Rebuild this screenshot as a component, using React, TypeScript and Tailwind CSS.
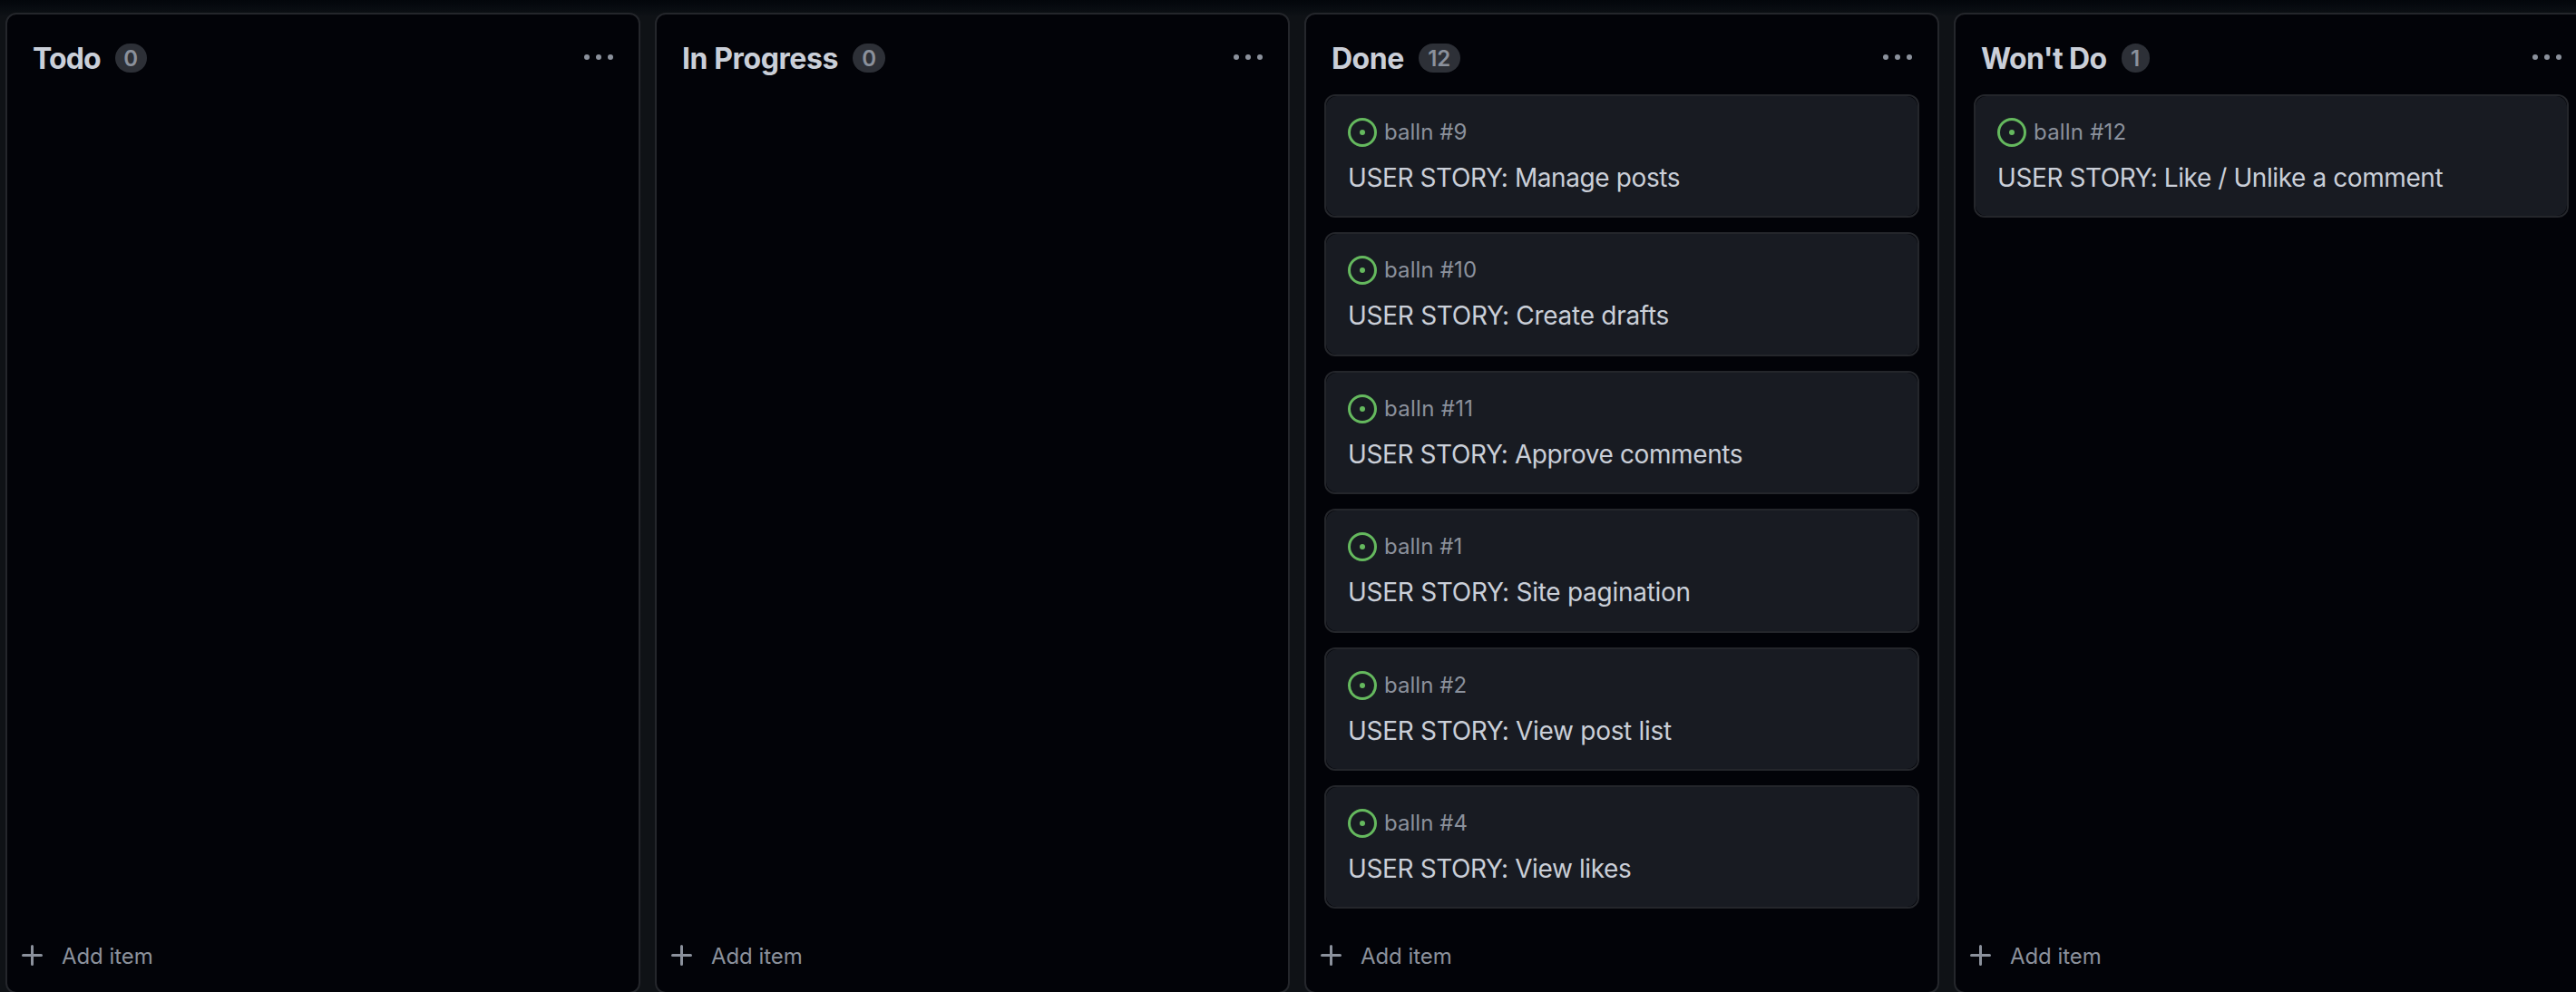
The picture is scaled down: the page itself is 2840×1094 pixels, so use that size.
import React from "react";

type Card = { ref: string; title: string; refClass?: string; titleClass?: string };
type ColumnData = {
  name: string;
  nameClass: string;
  count: number;
  pillClass: string;
  cards: Card[];
};

const columns: ColumnData[] = [
  { name: "Todo", nameClass: "tracking-[-0.9px]", count: 0, pillClass: "w-[35px]", cards: [] },
  { name: "In Progress", nameClass: "tracking-[-0.4px]", count: 0, pillClass: "w-[36px]", cards: [] },
  {
    name: "Done",
    nameClass: "tracking-[-0.5px]",
    count: 12,
    pillClass: "w-[46px]",
    cards: [
      { ref: "#9", title: "Manage posts" },
      { ref: "#10", title: "Create drafts", refClass: "tracking-[0.12px]", titleClass: "tracking-[-0.28px]" },
      { ref: "#11", title: "Approve comments", refClass: "tracking-[0.28px]" },
      { ref: "#1", title: "Site pagination", titleClass: "tracking-[-0.27px]" },
      { ref: "#2", title: "View post list", titleClass: "tracking-[-0.3px]" },
      { ref: "#4", title: "View likes", titleClass: "tracking-[-0.38px]" },
    ],
  },
  {
    name: "Won't Do",
    nameClass: "tracking-[-0.6px]",
    count: 1,
    pillClass: "w-[31px]",
    cards: [
      {
        ref: "#12",
        title: "Like / Unlike a comment",
        refClass: "tracking-[0.2px]",
        titleClass: "tracking-[-0.41px]",
      },
    ],
  },
];

function KebabIcon() {
  return (
    <svg viewBox="0 0 16 16" className="size-8 shrink-0 fill-[#8b919c]">
      <circle cx="1.5" cy="7.5" r="1.5" />
      <circle cx="8" cy="7.5" r="1.5" />
      <circle cx="14.5" cy="7.5" r="1.5" />
    </svg>
  );
}

function IssueIcon() {
  return (
    <svg viewBox="0 0 16 16" className="size-8 shrink-0">
      <circle cx="8" cy="8" r="7.25" fill="none" stroke="#65b95e" strokeWidth="1.5" />
      <circle cx="8" cy="8" r="1.5" fill="#65b95e" />
    </svg>
  );
}

function PlusIcon() {
  return (
    <svg viewBox="0 0 16 16" className="size-8 shrink-0 fill-[#8b919c]">
      <path d="M7.75 2a.75.75 0 01.75.75V7h4.25a.75.75 0 010 1.5H8.5v4.25a.75.75 0 01-1.5 0V8.5H2.75a.75.75 0 010-1.5H7V2.75A.75.75 0 017.75 2z" />
    </svg>
  );
}

function IssueCard({ card }: { card: Card }) {
  return (
    <article className="h-[136.4px] shrink-0 rounded-xl border-2 border-[#24262b]">
      <div className="h-full rounded-xl bg-[#181b22] px-6 pt-6">
        <div className="flex h-8 items-center gap-2">
          <IssueIcon />
          <span className={`text-2xl leading-8 text-[#8b919c] ${card.refClass ?? "tracking-[0.05px]"}`}>
            balln {card.ref}
          </span>
        </div>
        <h3
          className={`mt-3 text-[28px] leading-[44px] whitespace-nowrap text-[#cacfd8] ${card.titleClass ?? "tracking-[-0.4px]"}`}
        >
          USER STORY: {card.title}
        </h3>
      </div>
    </article>
  );
}

function Column({ column }: { column: ColumnData }) {
  return (
    <section className="flex h-[1082px] w-[700px] shrink-0 flex-col rounded-xl border-2 border-[#24262b] bg-[#020308]">
      <header className="flex h-[88px] shrink-0 items-start px-7 pt-8">
        <div className="flex h-8 flex-1 items-center gap-4">
          <h2 className={`pt-0.5 text-[32px] leading-8 font-[650] whitespace-nowrap text-[#cacfd8] ${column.nameClass}`}>
            {column.name}
          </h2>
          <span
            className={`flex h-8 items-center justify-center rounded-full bg-[#2d3037] pt-0.5 text-2xl leading-8 font-semibold text-[#8b919c] ${column.pillClass}`}
          >
            {column.count}
          </span>
        </div>
        <KebabIcon />
      </header>
      <div className="flex min-h-0 flex-1 flex-col gap-4 px-5">
        {column.cards.map((card) => (
          <IssueCard key={card.ref} card={card} />
        ))}
      </div>
      <button className="flex shrink-0 items-center gap-4 px-3 pb-6 text-2xl leading-8 tracking-[-0.07px] text-[#8b919c]">
        <PlusIcon />
        <span className="-mb-0.5">Add item</span>
      </button>
    </section>
  );
}

export default function App() {
  return (
    <main className="h-[1094px] w-[2840px] overflow-hidden bg-[#0f1216] bg-linear-to-b from-[#03060b] to-[#0f1216] to-[18px] font-['Inter','Liberation_Sans',sans-serif]">
      <div className="flex gap-4 pt-3.5 pl-1.5">
        {columns.map((column) => (
          <Column key={column.name} column={column} />
        ))}
      </div>
    </main>
  );
}
